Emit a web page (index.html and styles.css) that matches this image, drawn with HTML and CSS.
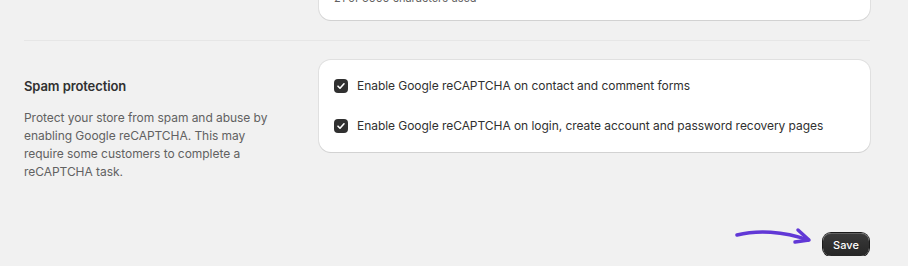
FILE: index.html
```html
<!DOCTYPE html>
<html>
<head>
  <title>Settings</title>
  <link rel="stylesheet" href="styles.css">
</head>
<body>
  <div class="page">
    <section class="section section-top">
      <div class="section-info"></div>
      <div class="card card-top">
        <p class="char-count">21 of 5000 characters used</p>
      </div>
    </section>

    <section class="section section-spam">
      <div class="section-info">
        <h2 class="section-title">Spam protection</h2>
        <p class="section-desc">Protect your store from spam and abuse by enabling Google reCAPTCHA. This may require some customers to complete a reCAPTCHA task.</p>
      </div>
      <div class="card card-options">
        <label class="option">
          <span class="checkbox">
            <svg viewBox="0 0 14 14" width="14" height="14"><path d="M4 7.2l2 2 4-4.4" fill="none" stroke="#fff" stroke-width="1.6" stroke-linecap="round" stroke-linejoin="round"/></svg>
          </span>
          Enable Google reCAPTCHA on contact and comment forms
        </label>
        <label class="option">
          <span class="checkbox">
            <svg viewBox="0 0 14 14" width="14" height="14"><path d="M4 7.2l2 2 4-4.4" fill="none" stroke="#fff" stroke-width="1.6" stroke-linecap="round" stroke-linejoin="round"/></svg>
          </span>
          Enable Google reCAPTCHA on login, create account and password recovery pages
        </label>
      </div>
    </section>

    <div class="footer">
      <svg class="arrow" viewBox="0 0 80 24" width="80" height="24">
        <path d="M2 8 C 22 3, 48 4, 73 13" fill="none" stroke="#6138d6" stroke-width="3.5" stroke-linecap="round"/>
        <path d="M63 3 L74 13 L60 15" fill="none" stroke="#6138d6" stroke-width="3.5" stroke-linecap="round" stroke-linejoin="round"/>
      </svg>
      <button class="btn-save">Save</button>
    </div>
  </div>
</body>
</html>
```

FILE: styles.css
```css
body {
  margin: 0;
  background-color: #f1f1f1;
  font-family: Inter, "Noto Sans", sans-serif;
  color: #303030;
  overflow: hidden;
}

.page {
  width: 846px;
  padding: 0 38px 0 24px;
}

.section {
  display: grid;
  grid-template-columns: 295px 551px;
}

.section-top {
  margin-top: -26px;
  padding-bottom: 20px;
  border-bottom: 1px solid #e6e6e6;
}

.section-spam {
  padding-top: 19px;
}

.card {
  background-color: #fff;
  border-radius: 12px;
  box-shadow: 0 1px 0 0 rgba(26, 26, 26, 0.07), 0 0 0 1px rgba(0, 0, 0, 0.07);
}

.card-top {
  padding: 16px 20px 14px 15px;
}

.char-count {
  margin: 0;
  font-size: 11px;
  line-height: 16px;
  color: #616161;
}

.section-info {
  padding-top: 16px;
}

.section-title {
  margin: 0;
  font-size: 13px;
  font-weight: 600;
  line-height: 20px;
  letter-spacing: -0.1px;
}

.section-desc {
  width: 250px;
  margin: 13px 0 0;
  font-size: 12px;
  line-height: 18px;
  letter-spacing: -0.05px;
  color: #616161;
}

.card-options {
  align-self: start;
  padding: 16px 15px;
  display: flex;
  flex-direction: column;
  gap: 20px;
}

.option {
  display: flex;
  align-items: center;
  gap: 9px;
  font-size: 12px;
  line-height: 20px;
  letter-spacing: -0.05px;
  color: #303030;
}

.checkbox {
  width: 14px;
  height: 14px;
  border-radius: 4px;
  background-color: #303030;
  display: flex;
  align-items: center;
  justify-content: center;
}

.footer {
  position: relative;
  display: flex;
  justify-content: flex-end;
  margin-top: 52px;
}

.arrow {
  position: absolute;
  right: 55px;
  top: -6px;
}

.btn-save {
  width: 46px;
  height: 23px;
  margin-right: 1px;
  border: none;
  border-radius: 8px;
  background: linear-gradient(#3a3a3a, #262626);
  box-shadow: 0 0 0 1px #1a1a1a, inset 0 1px 0 rgba(255, 255, 255, 0.2);
  color: #fff;
  font-family: Inter, "Noto Sans", sans-serif;
  font-size: 11px;
  font-weight: 500;
  cursor: pointer;
}
```
